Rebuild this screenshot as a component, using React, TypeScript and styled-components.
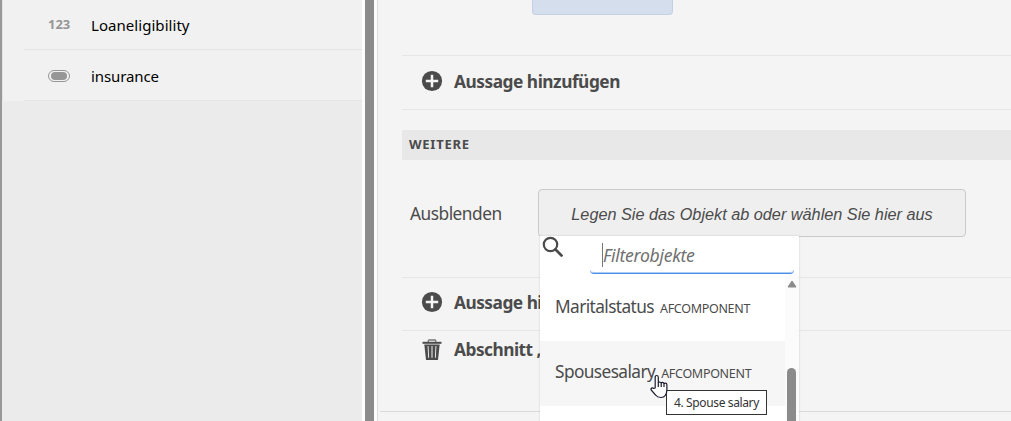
import React from 'react';
import styled, { createGlobalStyle } from 'styled-components';

const Global = createGlobalStyle`
  * { box-sizing: border-box; }
  body { margin: 0; overflow: hidden; font-family: "Noto Sans", "Open Sans", sans-serif; color: #4b4b4b; }
`;
const Page = styled.div`
  position: relative; display: flex; width: 1011px; height: 421px; overflow: hidden; background: #f4f4f4;
`;
const Sidebar = styled.aside`
  width: 362px; flex: none; background: #ebebeb; border-left: 2px solid #999;
`;
const Rows = styled.div`
  height: 101px; background: #f1f1f1; border-left: 1px solid #e2e2e2; padding-left: 21px;
`;
const SideRow = styled.div<{ $h: number; $pt?: number }>`
  height: ${p => p.$h}px; padding-top: ${p => p.$pt ?? 0}px; display: flex; align-items: center; border-bottom: 1px solid #e4e4e4;
  color: #000; font-size: 15px;
`;
const TypeIcon = styled.div`
  width: 22px; margin: 0 21px 2px 24px; display: flex; font-size: 13px; font-weight: 700; color: #969696;
`;
const Pill = styled.span`
  width: 22px; height: 12px; margin-top: 1px; border: 1.4px solid #969696; border-radius: 6px; padding: 1px;
  &::after { content: ""; display: block; height: 8px; margin: 0 1px; border-radius: 4px; background: #969696; }
`;
const Text = styled.span<{ $track?: number }>`
  white-space: nowrap; letter-spacing: ${p => p.$track ?? 0}px;
`;
const Splitter = styled.div`
  width: 15px; flex: none; background: #8b8b8b; border: solid #fdfdfd; border-width: 0 3px;
`;
const Main = styled.main`
  flex: 1; border-left: 1px solid #dcdcdc;
`;
const Section = styled.section`
  margin-left: 24px;
`;
const Top = styled.div`
  height: 56px; border-bottom: 1px solid #e6e6e6; padding-left: 130px;
`;
const BlueBox = styled.div`
  width: 141px; height: 15px; background: #d5deec; border: 1px solid #c4d1e5; border-top: 0; border-radius: 0 0 4px 4px;
`;
const Action = styled.div<{ $h: number; $line?: boolean; $pb?: number }>`
  height: ${p => p.$h}px; display: flex; align-items: center; padding: 0 0 ${p => p.$pb ?? 0}px 19px;
  border-bottom: ${p => (p.$line ? '1px solid #e6e6e6' : '0')};
  font-size: 17.3px; font-weight: 700;
  svg { width: 22px; height: 22px; margin-right: 11px; flex: none; }
`;
const Band = styled.div`
  margin-top: 20px; height: 30px; background: #e8e8e8; padding-left: 7px; line-height: 29px; font-size: 13px; font-weight: 700;
`;
const Field = styled.div`
  display: flex; height: 118px; padding: 29px 0 0 8px; border-bottom: 1px solid #e6e6e6;
`;
const FieldLabel = styled.label`
  width: 128px; line-height: 49px; font-size: 17.3px;
`;
const Drop = styled.div`
  width: 428px; height: 48px; border: 1px solid #cacaca; border-radius: 4px; background: #efefef;
  text-align: center; font: italic 16.25px/49px "Liberation Sans", sans-serif;
`;
const BottomLine = styled.div`
  margin-left: 2px; height: 1px; background: #dadada;
`;
const Popup = styled.div`
  position: absolute; left: 540px; top: 236px; width: 259px; height: 190px; background: #fff;
  box-shadow: 0 0 2px rgba(0,0,0,.16);
`;
const Search = styled.div`
  height: 38px; display: flex; align-items: flex-start;
  svg { margin: 0 26px 0 2px; flex: none; }
`;
const Input = styled.div`
  width: 204px; height: 38px; border-bottom: 1px solid #4b8fe2; border-radius: 4px; padding-left: 12px;
  box-shadow: inset 0 -1px 0 #a9cbf5;
  display: flex; align-items: center; font-size: 17.6px; font-style: italic; color: #707070;
`;
const Caret = styled.i`
  width: 1px; height: 24px; background: #777;
`;
const ListArea = styled.div`
  display: flex; justify-content: space-between; height: 152px;
`;
const List = styled.div`
  width: 245px;
`;
const Option = styled.div<{ $active?: boolean }>`
  height: 65px; margin-top: ${p => (p.$active ? 0 : 2)}px; padding-left: 15px; display: flex; align-items: baseline;
  background: ${p => (p.$active ? '#f6f6f6' : '#fff')}; line-height: 61px; font-size: 17.3px;
  small { font-size: 12.5px; margin-left: 6px; }
`;
const Scroll = styled.div`
  width: 14px; background: #fbfbfb; padding-left: 2px;
  svg { display: block; margin: 6px 0 80px; }
`;
const Thumb = styled.div`
  width: 9px; height: 60px; background: #8b8b8b; border-radius: 5px;
`;
const Tip = styled.div`
  position: absolute; left: 666px; top: 390px; width: 101px; height: 25px; border: 1px solid #333;
  background: #fff; padding-left: 7px; font-size: 12px; line-height: 23px; color: #333;
`;
const Cursor = styled.svg`
  position: absolute; left: 650px; top: 374px;
`;
const Plus = () => (
  <svg viewBox="0 0 22 22"><circle cx="11" cy="11" r="10.1" fill="#4b4b4b" /><path d="M11 4.8v12.4M4.8 11h12.4" stroke="#f4f4f4" strokeWidth="2.5" /></svg>
);
const Trash = () => (
  <svg viewBox="0 0 22 22" fill="#4b4b4b">
    <path d="M7.3 3V1.6Q7.3 1 8 1h6q.7 0 .7.6V3" fill="none" stroke="#777" strokeWidth="1.3" />
    <path d="M1.5 2.8h19v2h-19z" />
    <path fillRule="evenodd" d="M3.3 5.5h15.4L17 21H5zM6.6 7l.6 11.8h.9L7.5 7zM10.5 7v11.8h1V7zM14.5 7l-.6 11.8h.9L15.4 7z" />
  </svg>
);

export default function App() {
  return (
    <Page>
      <Global />
      <Sidebar>
        <Rows>
          <SideRow $h={50}><TypeIcon><Text>123</Text></TypeIcon><Text $track={0.05}>Loaneligibility</Text></SideRow>
          <SideRow $h={51} $pt={2}><TypeIcon><Pill /></TypeIcon><Text $track={-0.1}>insurance</Text></SideRow>
        </Rows>
      </Sidebar>
      <Splitter />
      <Main>
        <Section>
          <Top><BlueBox /></Top>
          <Action $h={54} $line $pb={3}><Plus /><Text $track={-0.47}>Aussage hinzufügen</Text></Action>
          <Band><Text $track={0.75}>WEITERE</Text></Band>
          <Field>
            <FieldLabel><Text $track={-0.5}>Ausblenden</Text></FieldLabel>
            <Drop><Text>Legen Sie das Objekt ab oder wählen Sie hier aus</Text></Drop>
          </Field>
          <Action $h={53} $line $pb={4}><Plus /><Text $track={-0.5}>Aussage hinzufügen</Text></Action>
          <Action $h={80} $pb={43}><Trash /><Text $track={-0.5}>Abschnitt „</Text></Action>
        </Section>
        <BottomLine />
      </Main>
      <Popup>
        <Search>
          <svg width="22" height="22" viewBox="0 0 22 22" fill="none" stroke="#4b4b4b"><circle cx="8.5" cy="8.5" r="6.7" strokeWidth="2.2" /><path d="M13.5 13.5l6 6" strokeWidth="2.7" strokeLinecap="round" /></svg>
          <Input><Caret /><Text $track={-0.3}>Filterobjekte</Text></Input>
        </Search>
        <ListArea>
          <List>
            <Option><Text $track={-0.6}>Maritalstatus</Text><small><Text $track={-0.3}>AFCOMPONENT</Text></small></Option>
            <Option $active><Text $track={-0.6}>Spousesalary</Text><small><Text $track={-0.3}>AFCOMPONENT</Text></small></Option>
          </List>
          <Scroll>
            <svg width="10" height="8" viewBox="0 0 10 8"><path d="M5 1L9 7H1z" fill="#8b8b8b" stroke="#8b8b8b" strokeLinejoin="round" /></svg>
            <Thumb />
          </Scroll>
        </ListArea>
      </Popup>
      <Tip><Text $track={-0.37}>4. Spouse salary</Text></Tip>
      <Cursor width="19" height="25" viewBox="0 0 19 25">
        <path d="M5.2 14V3.2Q5.2 1.5 6.7 1.5T8.3 3.2V9q.3-1 1.4-1t1.5 1.2q.3-.8 1.4-.8T14 9.8q.4-.7 1.3-.7 1.6 0 1.6 1.6V16q0 3-1.7 5.5-1.2 2-4.3 2-3.6 0-5-2.2L1.2 16Q.5 14.7 1.6 14.1t2 .4zM8.3 9v4M11.2 9.5v3.5M14 10v3" fill="#fff" stroke="#1a1c2c" strokeWidth="1.2" strokeLinejoin="round" />
      </Cursor>
    </Page>
  );
}
